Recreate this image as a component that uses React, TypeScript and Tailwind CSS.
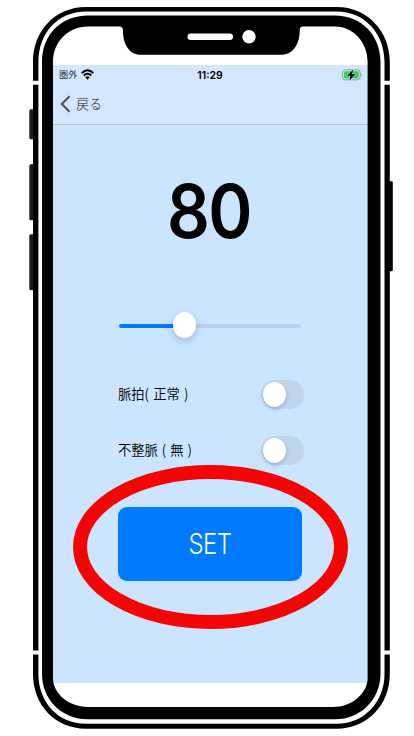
import React from "react";

const cjk = "font-['Noto_Sans_CJK_JP',sans-serif]";
const latin = "font-['Inter','Liberation_Sans',sans-serif]";

function PhoneFrame() {
  return (
    <svg className="pointer-events-none absolute inset-0" width="414" height="736" viewBox="0 0 414 736">
      <g fill="#1c1c1c">
        <rect x="29.3" y="109.3" width="5" height="30" rx="1.5" />
        <rect x="29.3" y="164.3" width="5" height="56" rx="1.5" />
        <rect x="29.3" y="234.3" width="5" height="56" rx="1.5" />
        <rect x="387" y="181.3" width="5.8" height="90" rx="1.2" fill="#000" />
      </g>
      <path
        fillRule="evenodd"
        d="M33 62C33 31 55 7 86 7H337C367 7 389.8 31 389.8 62V674C389.8 705 367 728.7 337 728.7H86C55 728.7 33 705 33 674Z
           M38.4 62V674C38.4 702 58 723.8 86 723.8H337C364 723.8 384.5 702 384.5 674V62C384.5 33 364 11.6 337 11.6H86C58 11.6 38.4 33 38.4 62Z"
      />
      <path
        fillRule="evenodd"
        d="M42 62C42 35 61 15.6 88 15.6H335C361 15.6 380.5 35 380.5 62V674C380.5 699 361 719.3 335 719.3H88C61 719.3 42 699 42 674Z
           M53 62V680C54 693 68 707 88 707H333C352 707 366 694 367.6 680V62C367.6 42 353 26.5 335 26.5H303C300.5 26.5 299.7 28 299.7 31C299.7 44 293 54.8 281 54.8H141C129 54.8 123 44 123 31C123 28 122 26.5 119.5 26.5H88C68 26.5 53 42 53 62Z"
      />
      <path d="M32 82.7H39.5M383.5 82.7H391M32 652.4H39.5M383.5 652.4H391" stroke="#fff" strokeWidth="4" />
      <rect x="187.5" y="33.5" width="45.5" height="6.5" rx="3.2" fill="#fff" />
      <circle cx="249" cy="36.7" r="6.7" fill="#fff" />
    </svg>
  );
}

function StatusBar() {
  return (
    <div className="flex h-[19px] items-center pl-1.5 pr-[5px]">
      <span className={`${cjk} mt-px w-[18px] whitespace-nowrap text-[9.2px] leading-none text-[#333]`}>圏外</span>
      <svg className="ml-1" width="13" height="11" viewBox="0 0 13 11" fill="none" stroke="#000">
        <path d="M.7 4.1Q6.5-1.8 12.3 4.1" strokeWidth="2" />
        <path d="M2.8 6.5Q6.5 2.9 10.2 6.5" strokeWidth="1.9" />
        <path d="M4.3 8.1Q6.5 6.3 8.7 8.1L6.5 10.7Z" fill="#000" stroke="none" />
      </svg>
      <span className={`${latin} ml-[102px] mt-[3px] w-7 whitespace-nowrap text-center text-[10.5px] font-semibold leading-none`}>11:29</span>
      <svg className="ml-auto" width="21" height="12" viewBox="0 0 21 12">
        <rect x=".6" y=".9" width="17.6" height="10" rx="2.8" fill="none" stroke="#8f9da9" />
        <rect x="2" y="2.3" width="14.8" height="7.2" rx="1.5" fill="#34d058" />
        <path d="M19 4.2Q20.8 6 19 7.8Z" fill="#8f9da9" />
        <path d="M11.2.4 5.4 6.7H8.6L7.4 11.6 13.2 5.2H10Z" fill="#000" stroke="#d2e6fc" strokeWidth=".8" paintOrder="stroke" />
      </svg>
    </div>
  );
}

function Toggle() {
  return (
    <div className="flex h-[29px] w-[43px] items-center rounded-full bg-[#bfd5ec] pl-0.5">
      <div className="h-[25px] w-[23px] rounded-[50%] bg-white shadow-[0_2px_4px_rgba(0,40,80,0.22)]" />
    </div>
  );
}

export default function App() {
  return (
    <div className="relative h-[736px] w-[414px] overflow-hidden bg-white">
      <div className="h-[65px]" />
      <main className="ml-[53px] h-[618px] w-[315px] bg-[#cce5ff] text-black">
        <header className="h-[60px] border-b border-[#b2c6da] bg-[#d2e6fc]">
          <StatusBar />
          <div className="flex h-[39px] items-center pl-[7px] text-[#555]">
            <svg width="11" height="18" viewBox="0 0 11 18" fill="none" stroke="#555" strokeWidth="2.2">
              <path d="M9.5 1.2 1.8 9 9.5 16.8" />
            </svg>
            <span className={`${cjk} ml-[5px] text-[13px] font-[350] leading-none scale-y-[1.08]`}>戻る</span>
          </div>
        </header>
        <div className="flex h-[172px] items-center justify-center pr-[3px]">
          <span className={`${latin} block origin-center scale-y-[1.1] text-[67px] font-semibold leading-none tracking-[-1.5px]`}>80</span>
        </div>
        <div className="ml-[66px] flex h-[57px] w-[182px] items-center">
          <div className="h-1 w-[60px] rounded-l-full bg-[#007aff]" />
          <div className="z-10 -ml-1.5 -mt-0.5 h-[26px] w-[23px] shrink-0 rounded-[50%] bg-white shadow-[0_3px_8px_rgba(0,40,80,0.25)]" />
          <div className="-ml-1 h-1 flex-1 rounded-r-full bg-[#b9d0e6]" />
        </div>
        <div className="ml-[65px] flex h-[81px] w-[186px] items-center justify-between">
          <span className={`${cjk} mb-px whitespace-pre text-[13.3px] font-[350] leading-none scale-y-[1.06] [word-spacing:1.2px]`}>脈拍( 正常 )</span>
          <Toggle />
        </div>
        <div className="ml-[65px] flex h-[31px] w-[186px] items-center justify-between">
          <span className={`${cjk} mb-px whitespace-pre text-[13.3px] font-[350] leading-none scale-y-[1.06] [word-spacing:1px]`}>不整脈 ( 無 )</span>
          <Toggle />
        </div>
        <button className="ml-[65px] mt-[41px] flex h-[74px] w-[184px] items-center justify-center rounded-[9px] bg-[#007aff] pt-0.5 text-white">
          <span className={`${latin} block scale-y-[1.17] text-[24px] font-[350] leading-none tracking-[-0.6px]`}>SET</span>
        </button>
      </main>
      <PhoneFrame />
      <svg className="pointer-events-none absolute inset-0" width="414" height="736" viewBox="0 0 414 736">
        <ellipse cx="210.5" cy="547" rx="130.5" ry="75" fill="none" stroke="#f40505" strokeWidth="14" />
      </svg>
    </div>
  );
}
